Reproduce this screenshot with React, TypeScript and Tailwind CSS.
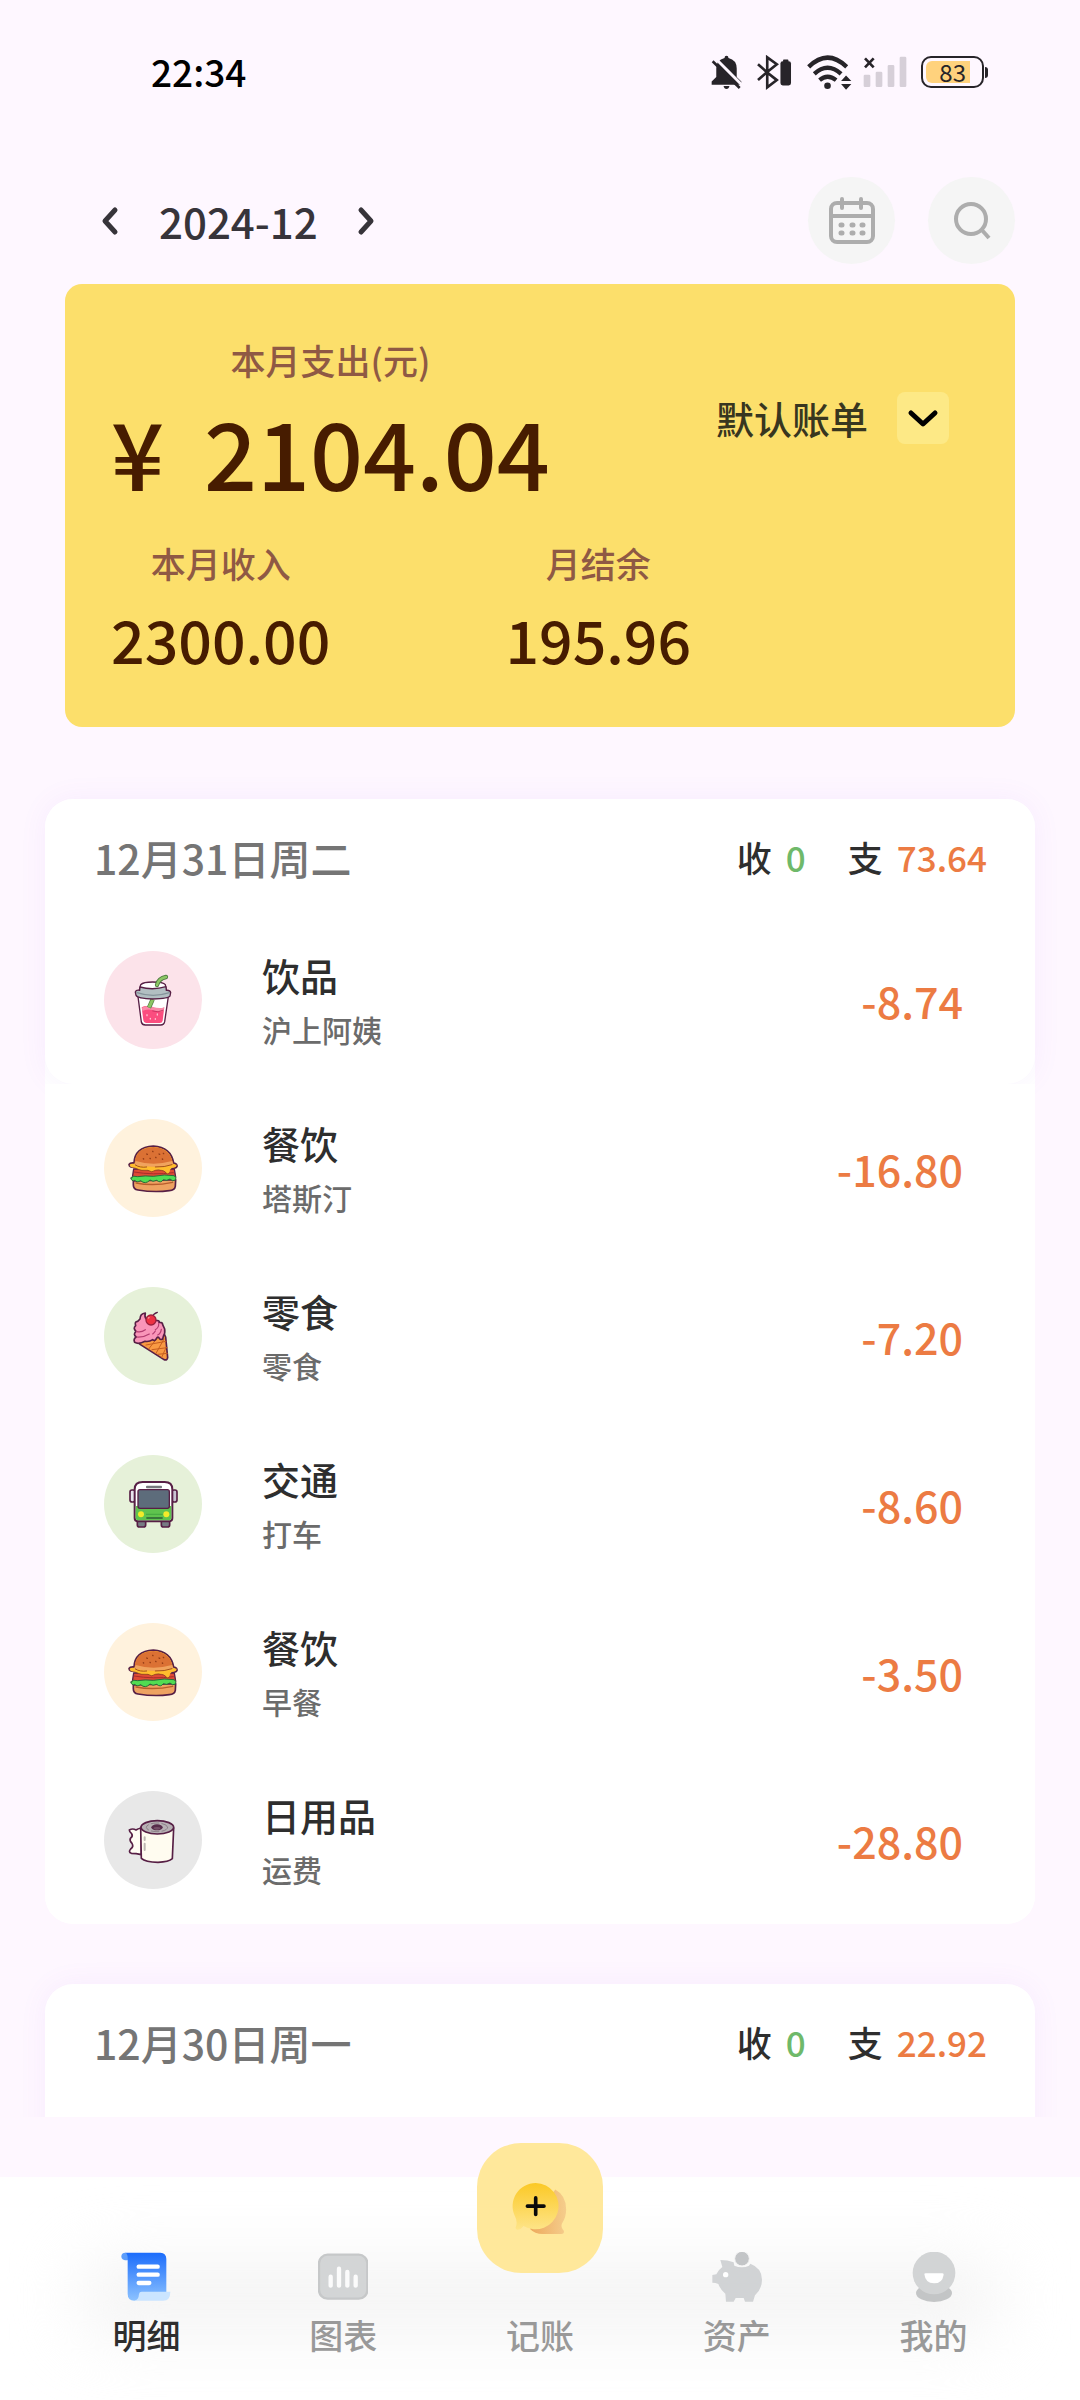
import React from "react";

const INK = "#571f45";

function CupIcon() {
  return (
    <svg viewBox="42 63 294 294" className="size-full" aria-hidden="true" strokeLinecap="round" strokeLinejoin="round">
      <path d="M144 200 L154 276 Q156 285 166 285 L212 285 Q222 285 224 275 L235 200Z" fill="#fff" stroke={INK} strokeWidth="4" />
      <path d="M155 232 Q170 224 188 233 Q204 241 223 232 L218 272 Q217 279 209 279 L168 279 Q161 279 160 271Z" fill="#fb4d7f" />
      <path d="M156 233 Q172 224 190 231 Q204 236 222 233 L221 242 Q205 249 189 241 Q172 235 157 243Z" fill="#f98aa8" />
      <path d="M188 243 Q205 249 219 241" fill="none" stroke="#c22a5a" strokeWidth="2.5" />
      <path d="M171 254v3M202 252v3M181 265v2M196 266v2" stroke="#ffc2d2" strokeWidth="4" />
      <path d="M188 208 L177 233" stroke="#4f7c41" strokeWidth="13" strokeLinecap="butt" />
      <path d="M188 209 L177 232" stroke="#8cc665" strokeWidth="9" strokeLinecap="butt" />
      <path d="M152 164 Q160 156 188 156 Q220 156 226 164 L229 180 L148 180Z" fill="#fff" stroke={INK} strokeWidth="4" />
      <path d="M150 171 Q188 182 228 170 L229 181 Q240 180 242 187 L240 198 Q236 206 189 207 Q142 206 138 196 L136 186 Q138 179 149 181Z" fill="#b2bfc2" stroke={INK} strokeWidth="4" />
      <path d="M141 188 Q189 204 238 188" fill="none" stroke="#84939a" strokeWidth="4" />
      <path d="M201 165 Q206 145 228 141" fill="none" stroke="#4f7c41" strokeWidth="13" />
      <path d="M201 165 Q206 145 228 141" fill="none" stroke="#8cc665" strokeWidth="8" />
    </svg>
  );
}

function BurgerIcon() {
  return (
    <svg viewBox="42 566 294 294" className="size-full" aria-hidden="true" strokeLinecap="round" strokeLinejoin="round">
      <path d="M130 752 L257 748 L256 768 Q254 780 238 781 Q192 787 144 779 Q130 777 130 764Z" fill="#eea261" stroke={INK} strokeWidth="5" />
      <path d="M138 758 Q190 768 248 756" fill="none" stroke="#b75c2d" strokeWidth="4" />
      <path d="M131 716 L253 716 L257 740 L127 742Z" fill="#df4a34" stroke={INK} strokeWidth="4" />
      <path d="M132 725 Q190 735 250 727" fill="none" stroke="#a92d2b" strokeWidth="3" />
      <path d="M123 743 Q130 734 143 739 Q165 735 190 738 Q225 731 252 736 Q262 741 256 749 Q248 755 240 746 Q230 753 220 748 Q212 760 200 750 Q188 756 180 749 Q166 764 152 751 Q140 758 135 750 Q123 754 123 743Z" fill="#51dc52" stroke="#2a6b39" strokeWidth="3" />
      <path d="M132 698 Q134 650 190 647 Q243 650 251 698 Q263 700 261 709 Q257 716 244 712 Q190 722 135 711 Q117 712 117 702 Q120 697 132 698Z" fill="#ffbd2d" stroke={INK} strokeWidth="5" />
      <path d="M134 697 Q137 652 190 650 Q240 653 248 697 Q220 708 190 708 Q155 707 134 697Z" fill="#db7134" />
      <path d="M137 692 Q190 708 246 692 L250 702 Q190 716 133 703Z" fill="#f0a35e" />
      <path d="M119 703 Q190 720 260 703 Q259 712 245 713 Q239 716 238 727 Q232 735 226 724 Q218 717 196 719 Q185 728 174 719 Q152 722 134 712 Q119 712 119 703Z" fill="#ffbd2d" />
      <path d="M136 704 Q150 713 170 710 M196 710 Q224 711 246 703" fill="none" stroke="#a24f22" strokeWidth="3" />
      <path d="M136 714 Q152 723 174 720 Q185 729 196 720 Q218 718 226 725 Q232 736 238 727" fill="none" stroke="#8e4521" strokeWidth="2.5" />
      <path d="M170 671l2 1M188 663l1 1M207 671l2 1M180 684l1 1M197 681l1 1M217 686l1 1M160 685l1 1M220 669l1 1" stroke="#933c16" strokeWidth="4" />
    </svg>
  );
}

function IceCreamIcon() {
  return (
    <svg viewBox="42 50 294 294" className="size-full" aria-hidden="true" strokeLinecap="round" strokeLinejoin="round">
      <path d="M146 215 L222 190 L227 200 L233 262 Q232 271 222 268 L150 222Z" fill="#f99a43" stroke={INK} strokeWidth="5" />
      <path d="M168 224 L228 213 M186 238 L231 232 M203 252 L232 249 M176 236 L200 205 M198 249 L222 206 M215 261 L228 232" fill="none" stroke="#c75f20" strokeWidth="3" />
      <path d="M150 146 Q150 130 166 128 Q163 140 168 145 L198 150 Q210 150 207 156 Q218 155 218 163 L224 176 Q226 190 220 198 L218 206 Q211 210 208 204 Q204 196 199 205 Q194 214 188 208 Q178 215 165 213 Q146 223 134 216 Q129 206 139 200 Q128 193 138 183 Q128 174 137 166 Q133 153 143 153Z" fill="#f995b9" stroke={INK} strokeWidth="5" />
      <path d="M139 183 Q152 188 166 178 M139 200 Q160 202 178 191 M206 160 Q207 172 196 178 M214 177 Q212 190 203 194 M188 191 Q193 187 196 182" fill="none" stroke="#b43d71" strokeWidth="3.5" />
      <path d="M186 140 Q190 130 202 126" fill="none" stroke={INK} strokeWidth="4" />
      <circle cx="183" cy="149" r="15" fill="#ec3142" stroke="#9d1f3d" strokeWidth="4" />
      <path d="M175 143l2-1" stroke="#ff9aa0" strokeWidth="4" />
    </svg>
  );
}

function BusIcon() {
  return (
    <svg viewBox="42 555 294 294" className="size-full" aria-hidden="true" strokeLinejoin="round">
      <rect x="142" y="746" width="25" height="25" rx="6" fill="#777b83" stroke={INK} strokeWidth="5" />
      <rect x="214" y="746" width="25" height="25" rx="6" fill="#777b83" stroke={INK} strokeWidth="5" />
      <rect x="120" y="660" width="15" height="36" rx="6" fill="#e8e5ee" stroke={INK} strokeWidth="5" />
      <rect x="246" y="660" width="15" height="36" rx="6" fill="#c9c4d2" stroke={INK} strokeWidth="5" />
      <path d="M134 658 Q134 636 158 636 L224 636 Q247 636 247 658 L247 744 Q247 754 236 754 L144 754 Q134 754 134 744Z" fill="#fff" stroke={INK} strokeWidth="6" />
      <path d="M137 708 L244 708 L244 744 Q244 751 236 751 L145 751 Q137 751 137 744Z" fill="#5fc34e" />
      <rect x="144" y="659" width="94" height="56" rx="6" fill="#5d6c7b" stroke={INK} strokeWidth="4" />
      <rect x="168" y="647" width="48" height="8" rx="3" fill="#77777c" />
      <circle cx="153" cy="733" r="9" fill="#f4ea2a" />
      <circle cx="229" cy="733" r="9" fill="#f4ea2a" />
      <path d="M169 744h49" stroke="#2c5c36" strokeWidth="5" />
      <path d="M168 733h50" stroke="#48ab42" strokeWidth="4" />
    </svg>
  );
}

function PaperIcon() {
  return (
    <svg viewBox="42 573 294 294" className="size-full" aria-hidden="true" strokeLinecap="round" strokeLinejoin="round">
      <path d="M154 684 Q143 686 138 690 Q128 684 118 690 Q118 696 125 701 Q130 708 121 715 Q118 722 126 730 Q132 740 122 747 Q114 756 124 760 Q138 760 154 764Z" fill="#fffdf4" stroke={INK} strokeWidth="5" />
      <path d="M152 682 L154 775 Q166 786 204 787 Q236 786 247 776 L251 684Z" fill="#fffcf0" stroke={INK} strokeWidth="5" />
      <ellipse cx="202" cy="682" rx="49" ry="20" fill="#b7b0b4" stroke={INK} strokeWidth="5" />
      <ellipse cx="201" cy="682" rx="32" ry="13" fill="none" stroke="#8e8289" strokeWidth="3" strokeDasharray="22 9" />
      <ellipse cx="201" cy="682" rx="17" ry="9" fill="#572c4a" />
      <ellipse cx="201" cy="685" rx="10" ry="4" fill="#765068" />
      <path d="M164 712v8M164 731v19" stroke="#bdb8b2" strokeWidth="6" />
    </svg>
  );
}

function StatusIcons() {
  return (
    <div className="flex items-center">
      <svg viewBox="64 73 94 104" className="mr-[15px] h-[35px] w-[31px]" aria-label="静音">
        <path d="M111 74 Q117 74 117 81 Q142 87 142 113 L142 139 L156 152 L156 162 L66 162 L66 152 L80 139 L80 113 Q80 87 105 81 Q105 74 111 74Z" fill="#272429" />
        <path d="M102 166h18q-2 9-9 9t-9-9z" fill="#272429" />
        <path d="M77 82 L158 163" stroke="#fef7ff" strokeWidth="9" />
        <path d="M69 91 L151 172" stroke="#272429" strokeWidth="8" />
      </svg>
      <svg viewBox="202 74 106 104" className="mr-[15px] h-[35px] w-[35px]" aria-label="蓝牙" fill="none" stroke="#272429" strokeWidth="8">
        <path d="M205 101 L232 125 L205 149 M232 125 L262 101 L233 80 L233 171 L262 149Z" />
        <rect x="273" y="92" width="32" height="73" rx="7" fill="#272429" stroke="none" />
        <rect x="281" y="87" width="16" height="8" rx="2" fill="#272429" stroke="none" />
      </svg>
      <svg viewBox="350 71 136 104" className="mr-[11px] h-[35px] w-[45px]" aria-label="无线网络" fill="none" stroke="#272429" strokeWidth="13">
        <path d="M355 106 Q412 50 470 106 M372 127 Q412 90 453 127 M388 146 Q412 126 438 146" />
        <circle cx="412" cy="163" r="10" fill="#272429" stroke="none" />
        <path d="M453 149 L468 132 L484 149Z M453 158 L468 175 L484 158Z" fill="#272429" stroke="none" />
      </svg>
      <svg viewBox="518 78 132 96" className="mr-[14px] h-8 w-11" aria-label="无信号">
        <path d="M520 138q0-4 4-4h12q4 0 4 4v29q0 4-4 4h-12q-4 0-4-4z M556 129q0-4 4-4h12q4 0 4 4v38q0 4-4 4h-12q-4 0-4-4z M592 109q0-4 4-4h12q4 0 4 4v58q0 4-4 4h-12q-4 0-4-4z M628 84q0-4 4-4h12q4 0 4 4v83q0 4-4 4h-12q-4 0-4-4z" fill="#d6cfd8" />
        <path d="M524 85 L550 112 M550 85 L524 112" stroke="#272429" strokeWidth="8" />
      </svg>
      <div className="flex items-center gap-px">
        <div className="flex h-8 w-[63px] rounded-[10px] border-2 border-[#272429] p-[3px]">
          <div className="flex w-11 items-center justify-end rounded-l-md bg-[#ffd27d] pr-1 text-2xl leading-none font-normal text-[#272429]">83</div>
        </div>
        <div className="h-[11px] w-[3px] rounded-r bg-[#272429]" />
      </div>
    </div>
  );
}

function Chevron({ d }: { d: string }) {
  return (
    <svg viewBox="0 0 32 32" className="size-8" fill="none" stroke="currentColor" strokeWidth="5" strokeLinecap="round" strokeLinejoin="round" aria-hidden="true">
      <path d={d} />
    </svg>
  );
}

function CalendarIcon() {
  return (
    <svg viewBox="0 0 48 48" className="size-12" fill="none" stroke="#adadad" strokeWidth="4" strokeLinecap="round" aria-hidden="true">
      <rect x="3" y="6" width="42" height="39" rx="6" />
      <path d="M3 19h42" strokeLinecap="butt" />
      <path d="M14 2v9M33 2v9" />
      <path d="M13 28h1M24 28h1M34 28h1M13 36h1M24 36h1M34 36h1" strokeWidth="5" />
    </svg>
  );
}

function SearchIcon() {
  return (
    <svg viewBox="0 0 40 40" className="size-10" fill="none" stroke="#adadad" strokeWidth="4" aria-hidden="true">
      <circle cx="19" cy="18" r="15" />
      <path d="M29 28 L37 37" />
    </svg>
  );
}

type Entry = { title: string; note: string; amount: string; tint: string; icon: React.ReactNode };

const entries: Entry[] = [
  { title: "饮品", note: "沪上阿姨", amount: "-8.74", tint: "bg-[#fce3ea]", icon: <CupIcon /> },
  { title: "餐饮", note: "塔斯汀", amount: "-16.80", tint: "bg-[#fff2dd]", icon: <BurgerIcon /> },
  { title: "零食", note: "零食", amount: "-7.20", tint: "bg-[#e6f1d9]", icon: <IceCreamIcon /> },
  { title: "交通", note: "打车", amount: "-8.60", tint: "bg-[#e6f1d9]", icon: <BusIcon /> },
  { title: "餐饮", note: "早餐", amount: "-3.50", tint: "bg-[#fff2dd]", icon: <BurgerIcon /> },
  { title: "日用品", note: "运费", amount: "-28.80", tint: "bg-[#e8e8e8]", icon: <PaperIcon /> },
];

function EntryRow({ entry }: { entry: Entry }) {
  return (
    <div className="flex h-[168px] items-center pr-[72px] pl-[59px]">
      <div className={"size-[98px] shrink-0 overflow-hidden rounded-full " + entry.tint}>{entry.icon}</div>
      <div className="ml-[60px] flex-1 pt-1">
        <div className="text-[38px] leading-[54px] text-[#2e2e2e]">{entry.title}</div>
        <div className="text-[30px] leading-[54px] text-[#6b6b6b]">{entry.note}</div>
      </div>
      <div className="text-[43px] leading-[54px] text-[#ec7b43]">{entry.amount}</div>
    </div>
  );
}

function DayHeader({ date, income, expense }: { date: string; income: string; expense: string }) {
  return (
    <div className="flex h-[117px] items-center justify-between pr-12 pl-[49px]">
      <h2 className="text-[41px] font-medium text-[#757575]">{date}</h2>
      <div className="flex items-center gap-[42px] text-[35px]">
        <div className="flex gap-[14px]">
          <span className="text-[#2e2e2e]">收</span>
          <span className="text-[#6fb96a]">{income}</span>
        </div>
        <div className="flex gap-[14px]">
          <span className="text-[#2e2e2e]">支</span>
          <span className="text-[#ec7b43]">{expense}</span>
        </div>
      </div>
    </div>
  );
}

function DetailIcon() {
  return (
    <svg viewBox="64 67 150 150" className="size-[50px]" aria-hidden="true">
      <defs>
        <linearGradient id="detail" x1="0" y1="0" x2="0" y2="1">
          <stop offset="0" stopColor="#1b6cfb" />
          <stop offset="1" stopColor="#8cc2ff" />
        </linearGradient>
      </defs>
      <path d="M77 69 Q65 69 65 81 Q65 92 84 92 L90 80Z" fill="#5c9dfb" />
      <path d="M76 69 L182 69 Q200 70 200 88 L200 200 L120 200 Q118 213 104 213 Q84 213 84 192 L84 84 Q84 72 76 69Z" fill="url(#detail)" />
      <path d="M118 193 Q119 186 126 186 L212 186 Q212 213 190 213 L104 213 Q117 211 118 193Z" fill="#cbe5ff" />
      <path d="M117 111h57M117 135h57M117 160h32" stroke="#fff" strokeWidth="13" strokeLinecap="round" />
    </svg>
  );
}

function ChartIcon() {
  return (
    <svg viewBox="657 67 150 150" className="size-[50px]" aria-hidden="true">
      <rect x="660" y="75" width="145" height="132" rx="26" fill="#d3d5d6" stroke="#c6c8c9" strokeWidth="7" />
      <path d="M695 141v27M720 117v51M745 127v41M770 141v27" stroke="#fbfbfb" strokeWidth="13" strokeLinecap="round" />
    </svg>
  );
}

function AssetIcon() {
  return (
    <svg viewBox="65 67 150 150" className="size-[50px]" aria-hidden="true">
      <path d="M90 91 Q112 91 130 98 L132 108 Q155 118 176 108 L180 102 Q215 115 215 150 Q215 178 194 197 L188 216 L164 216 L160 205 L136 205 L130 216 L107 216 L105 192 Q90 180 84 163 Q76 159 66 159 L66 136 L78 134 Q82 122 96 112Z" fill="#d1d3d5" />
      <circle cx="155" cy="87" r="22" fill="#c3c5c7" stroke="#f7f7f7" strokeWidth="3" />
      <circle cx="106" cy="135" r="8" fill="#fff" />
    </svg>
  );
}

function MineIcon() {
  return (
    <svg viewBox="656 67 150 150" className="size-[50px]" aria-hidden="true">
      <ellipse cx="731" cy="190" rx="54" ry="27" fill="#c3c5c6" />
      <circle cx="731" cy="130" r="64" fill="#d2d4d5" />
      <path d="M702 133 Q702 131 706 131 L756 131 Q760 131 760 135 Q756 161 731 161 Q705 161 702 133Z" fill="#fff" />
    </svg>
  );
}

function AddIcon() {
  return (
    <svg viewBox="158 155 168 160" className="h-[53px] w-14" aria-hidden="true">
      <defs>
        <linearGradient id="bubble" x1="0" y1="0" x2="0" y2="1">
          <stop offset="0" stopColor="#fbc926" />
          <stop offset="1" stopColor="#fee488" />
        </linearGradient>
        <linearGradient id="bubbleBack" x1="0" y1="0" x2="1" y2="0">
          <stop offset="0" stopColor="#eda95c" />
          <stop offset="1" stopColor="#f5cd8c" />
        </linearGradient>
      </defs>
      <path d="M288 178 Q321 196 321 238 Q321 262 308 281 Q304 291 314 302 Q316 312 306 312 L250 312 Q226 312 212 297Z" fill="url(#bubbleBack)" />
      <path d="M229 158 A70 70 0 1 1 192 288 Q184 300 172 299 L168 294 Q176 276 166 258 A70 70 0 0 1 229 158Z" fill="url(#bubble)" />
      <path d="M229 203v50M204 228h50" stroke="#0a0a0a" strokeWidth="11" strokeLinecap="round" />
    </svg>
  );
}

function Tab({ label, icon, active }: { label: string; icon: React.ReactNode; active?: boolean }) {
  return (
    <button type="button" className={"flex flex-col items-center " + (active ? "text-[#2e2e2e]" : "text-[#999]")}>
      {icon}
      <span className="mt-2 text-[34px] leading-[50px]">{label}</span>
    </button>
  );
}

export default function App() {
  return (
    <div className="flex h-screen flex-col bg-[#fef7ff] font-['Noto_Sans_CJK_SC',sans-serif] font-medium">
      <div className="flex h-36 shrink-0 items-center justify-between pr-[92px] pl-[151px] text-[37px] text-black">
        <time>22:34</time>
        <StatusIcons />
      </div>

      <header className="mt-[33px] flex h-[87px] shrink-0 items-center justify-between px-[65px]">
        <div className="flex items-center gap-8 pl-[30px] text-[#37343a]">
          <button type="button" aria-label="上个月">
            <Chevron d="M20 5 L10 16 L20 27" />
          </button>
          <h1 className="text-[42px] font-medium">2024-12</h1>
          <button type="button" aria-label="下个月">
            <Chevron d="M11 5 L21 16 L11 27" />
          </button>
        </div>
        <div className="flex gap-[33px]">
          <button type="button" aria-label="日历" className="flex size-[87px] items-center justify-center rounded-full bg-[#f5f5f5]">
            <CalendarIcon />
          </button>
          <button type="button" aria-label="搜索" className="flex size-[87px] items-center justify-center rounded-full bg-[#f5f5f5]">
            <SearchIcon />
          </button>
        </div>
      </header>

      <section className="mx-[65px] mt-5 flex shrink-0 items-start justify-between rounded-[17px] bg-[#fcdf6b] pt-[51px] pr-[66px] pb-12 pl-[46px] text-[#471c00]">
        <div>
          <div className="flex w-fit flex-col items-center">
            <div className="text-[35px] leading-[50px] text-[#8f5944]">本月支出(元)</div>
            <div className="mt-[11px] flex gap-10 text-[93px] leading-[110px]">
              <span>¥</span>
              <span>2104.04</span>
            </div>
          </div>
          <div className="mt-8 flex gap-[175px]">
            <div className="flex flex-col items-center">
              <div className="text-[35px] leading-[50px] text-[#8f5944]">本月收入</div>
              <div className="mt-[11px] text-[59px] leading-[80px]">2300.00</div>
            </div>
            <div className="flex flex-col items-center">
              <div className="text-[35px] leading-[50px] text-[#8f5944]">月结余</div>
              <div className="mt-[11px] text-[59px] leading-[80px]">195.96</div>
            </div>
          </div>
        </div>
        <div className="relative mt-[57px] h-[52px]">
          <select aria-label="账单" className="h-full appearance-none bg-transparent pr-20 text-[38px] leading-[52px] text-[#38361f]">
            <option>默认账单</option>
          </select>
          <span className="pointer-events-none absolute top-0 right-0 flex size-[52px] items-center justify-center rounded-lg bg-[#fde986] text-black">
            <Chevron d="M4 11 L16 22 L28 11" />
          </span>
        </div>
      </section>

      <main className="flex min-h-0 flex-1 flex-col gap-[60px] overflow-y-auto px-[45px] pt-[72px] [scrollbar-width:none]">
        <section className="shrink-0 rounded-[28px] bg-white">
          <div className="rounded-[28px] bg-white shadow-[0_0_28px_rgba(160,80,240,0.07)]">
            <DayHeader date="12月31日周二" income="0" expense="73.64" />
            <EntryRow entry={entries[0]} />
          </div>
          <div className="relative rounded-b-[28px] bg-white">
            {entries.slice(1).map((entry) => (
              <EntryRow key={entry.title + entry.note} entry={entry} />
            ))}
          </div>
        </section>
        <section className="shrink-0 rounded-t-[28px] bg-white pb-24 shadow-[0_0_28px_rgba(160,80,240,0.07)]">
          <DayHeader date="12月30日周一" income="0" expense="22.92" />
        </section>
      </main>

      <nav className="relative mt-[60px] h-[223px] shrink-0 bg-white px-12">
        <div className="absolute inset-x-20 top-[85px] bottom-[65px] rounded-3xl bg-[#f4f4f4] blur-[32px]" />
        <div className="relative grid h-full grid-cols-5 items-end pb-10">
          <Tab label="明细" icon={<DetailIcon />} active />
          <Tab label="图表" icon={<ChartIcon />} />
          <button type="button" className="flex flex-col items-center text-[#999]">
            <span className="-mt-[34px] flex h-[130px] w-[126px] items-center justify-center rounded-[44px] bg-[#ffe89b]">
              <AddIcon />
            </span>
            <span className="mt-[37px] text-[34px] leading-[50px]">记账</span>
          </button>
          <Tab label="资产" icon={<AssetIcon />} />
          <Tab label="我的" icon={<MineIcon />} />
        </div>
      </nav>
    </div>
  );
}
